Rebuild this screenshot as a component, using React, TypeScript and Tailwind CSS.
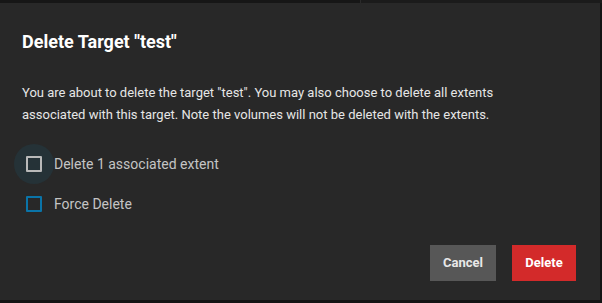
export default function App() {
  return (
    <div className="w-[602px] h-[303px] bg-[#141414] overflow-hidden" style={{ fontFamily: 'Roboto, "Noto Sans", sans-serif' }}>
      <div className="flex h-[3px]">
        <div className="w-[360px] bg-[#161616]" />
        <div className="flex-1 bg-[#1b1b1b] border-l border-[#2a2a2a]" />
      </div>
      <div className="w-[600px] h-[297px] bg-[#282828] flex flex-col pl-[22px] pr-[24px]">
        <h2 className="mt-[26px] text-[18px] leading-[26px] font-bold text-white">Delete Target "test"</h2>
        <p className="mt-[27px] w-[480px] text-[13px] leading-[22px] text-[#e6e6e6]">
          You are about to delete the target "test". You may also choose to delete all extents associated with this target. Note the volumes will not be deleted with the extents.
        </p>
        <div className="mt-[18px] flex items-center h-[40px] -ml-[8px]">
          <div className="w-[40px] h-[40px] rounded-full bg-[#253237] flex items-center justify-center">
            <div className="w-[16px] h-[16px] border-2 border-[#b9b9b9] rounded-[1px]" />
          </div>
          <span className="text-[14px] text-[#c4c4c4]">Delete 1 associated extent</span>
        </div>
        <div className="flex items-center h-[40px] -ml-[8px]">
          <div className="w-[40px] h-[40px] flex items-center justify-center">
            <div className="w-[16px] h-[16px] border-2 border-[#0a74a8] rounded-[1px]" />
          </div>
          <span className="text-[14px] text-[#c4c4c4]">Force Delete</span>
        </div>
        <div className="mt-[21px] flex justify-end gap-[16px]">
          <button className="w-[66px] h-[36px] bg-[#575757] text-[13px] font-bold text-[#e8e8e8]">Cancel</button>
          <button className="w-[64px] h-[36px] bg-[#d32a2a] text-[13px] font-bold text-white">Delete</button>
        </div>
      </div>
    </div>
  );
}
